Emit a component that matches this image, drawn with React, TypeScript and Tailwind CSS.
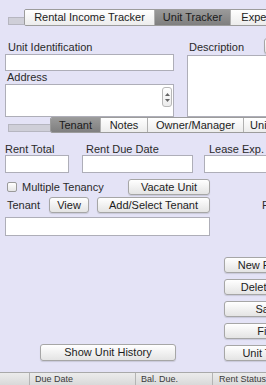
import React from 'react';

const btn =
  'flex items-center justify-center rounded-[3px] border border-[#a6a6a6] bg-gradient-to-b from-white to-[#e4e4e4] text-[11px] leading-none text-[#1c1c1c] shadow-[0_1px_1px_rgba(0,0,0,0.12)] whitespace-nowrap';
const field = 'bg-white border border-[#aeaeb8]';
const label = 'text-[11px] leading-[12px] text-[#2a2a2a] whitespace-nowrap';

type TabProps = { text: string; w: string; active?: boolean };

const Tab = ({ text, w, active }: TabProps) => (
  <div
    className={`${w} h-full shrink-0 flex items-center justify-center text-[11px] border-r border-[#b0b0b0] whitespace-nowrap ${
      active
        ? 'bg-gradient-to-b from-[#9a9a9a] to-[#7f7f7f] text-[#1a1a1a]'
        : 'bg-gradient-to-b from-white to-[#ececec] text-[#222]'
    }`}
  >
    {text}
  </div>
);

const Stepper = () => (
  <div className="absolute right-[1px] top-[2px] w-[10px] h-[20px] rounded-[3px] border border-[#b8b8b8] bg-gradient-to-b from-white to-[#ececec] flex flex-col items-center justify-center gap-[3px]">
    <svg width="5" height="3" viewBox="0 0 5 3">
      <path d="M0 3 L2.5 0 L5 3 Z" fill="#666" />
    </svg>
    <svg width="5" height="3" viewBox="0 0 5 3">
      <path d="M0 0 L2.5 3 L5 0 Z" fill="#666" />
    </svg>
  </div>
);

export default function App() {
  return (
    <div className="w-[266px] h-[385px] overflow-hidden bg-[#e4e3f6] font-['Liberation_Sans',Arial,sans-serif] flex flex-col">
      {/* main tabs */}
      <div className="flex items-end pt-[9px] pl-[8px] w-[400px]">
        <div className="w-[16px] h-[8px] mb-[1px] bg-[#cfcfd8] border border-[#b6b6c0] border-r-0" />
        <div className="flex h-[17px] border border-[#9c9c9c] rounded-[2px] overflow-hidden">
          <Tab text="Rental Income Tracker" w="w-[130px]" />
          <Tab text="Unit Tracker" w="w-[76px]" active />
          <Tab text="Expenses" w="w-[70px]" />
        </div>
      </div>

      {/* unit / description */}
      <div className="flex pl-[5px] mt-[14px] w-[400px]">
        <div className="w-[169px] flex flex-col">
          <div className={`${label} h-[14px] leading-[14px] pl-[3px]`}>Unit Identification</div>
          <div className={`${field} h-[17px]`} />
          <div className={`${label} h-[13px] leading-[13px] pl-[2px]`}>Address</div>
          <div className={`${field} h-[33px] relative`}>
            <Stepper />
          </div>
        </div>
        <div className="ml-[13px] w-[110px] flex flex-col">
          <div className="flex h-[15px]">
            <div className={`${label} h-[14px] leading-[14px] pl-[2px]`}>Description</div>
            <div className={`${btn} ml-[20px] -mt-[2px] h-[16px] w-[40px]`}>Edit</div>
          </div>
          <div className={`${field} h-[62px]`} />
        </div>
      </div>

      {/* sub tabs */}
      <div className="flex items-end pl-[8px] w-[400px]">
        <div className="w-[42px] h-[8px] mb-[1px] bg-[#cfcfd8] border border-[#b6b6c0] border-r-0" />
        <div className="flex h-[16px] border border-[#9c9c9c] rounded-[2px] overflow-hidden">
          <Tab text="Tenant" w="w-[50px]" active />
          <Tab text="Notes" w="w-[47px]" />
          <Tab text="Owner/Manager" w="w-[96px]" />
          <Tab text="Unit History" w="w-[70px]" />
        </div>
      </div>

      {/* rent row */}
      <div className="flex pl-[5px] mt-[10px] w-[400px]">
        <div className="w-[64px] flex flex-col">
          <div className={`${label}`}>Rent Total</div>
          <div className={`${field} h-[18px]`} />
        </div>
        <div className="ml-[13px] w-[111px] flex flex-col">
          <div className={`${label} pl-[4px]`}>Rent Due Date</div>
          <div className={`${field} h-[18px]`} />
        </div>
        <div className="ml-[11px] w-[90px] flex flex-col">
          <div className={`${label} pl-[5px]`}>Lease Exp.</div>
          <div className={`${field} h-[18px]`} />
        </div>
      </div>

      {/* lower area */}
      <div className="flex pl-[5px] mt-[6px] h-[182px] w-[400px]">
        <div className="w-[205px] flex flex-col">
          <div className="flex items-center h-[16px]">
            <div className="ml-[2px] w-[10px] h-[10px] rounded-[2px] border border-[#9a9a9a] bg-gradient-to-b from-white to-[#e6e6e6]" />
            <div className="ml-[5px] text-[11px] text-[#2a2a2a] whitespace-nowrap">Multiple Tenancy</div>
            <div className={`${btn} ml-auto h-[16px] w-[82px]`}>Vacate Unit</div>
          </div>
          <div className="flex items-center h-[16px] mt-[2px]">
            <div className="ml-[2px] text-[11px] text-[#2a2a2a]">Tenant</div>
            <div className={`${btn} ml-[9px] h-[16px] w-[40px]`}>View</div>
            <div className={`${btn} ml-auto h-[16px] w-[113px]`}>Add/Select Tenant</div>
          </div>
          <div className={`${field} h-[19px] mt-[4px]`} />
          <div className={`${btn} mt-auto ml-[35px] h-[17px] w-[136px]`}>Show Unit History</div>
        </div>
        <div className="ml-[14px] w-[88px] flex flex-col">
          <div className="pl-[38px] mt-[20px] text-[11px] leading-[12px] text-[#2a2a2a] whitespace-nowrap">For Rent</div>
          <div className="mt-auto flex flex-col gap-[6px]">
            <div className={`${btn} h-[16px] w-[88px]`}>New Record</div>
            <div className={`${btn} h-[16px] w-[88px]`}>Delete Unit</div>
            <div className={`${btn} h-[16px] w-[88px]`}>Save</div>
            <div className={`${btn} h-[16px] w-[88px]`}>Find</div>
            <div className={`${btn} h-[16px] w-[88px]`}>Unit Totals</div>
          </div>
        </div>
      </div>

      {/* table header */}
      <div className="mt-auto h-[13px] flex border-t border-[#a9a9a9] bg-gradient-to-b from-[#ececec] to-[#d9d9d9] text-[9px] leading-[12px] text-[#3a3a3a] w-[400px]">
        <div className="w-[30px] border-r border-[#b4b4b4]" />
        <div className="w-[106px] border-r border-[#b4b4b4] pl-[5px]">Due Date</div>
        <div className="w-[77px] border-r border-[#b4b4b4] pl-[5px]">Bal. Due.</div>
        <div className="w-[90px] pl-[6px] whitespace-nowrap">Rent Status</div>
      </div>
    </div>
  );
}
